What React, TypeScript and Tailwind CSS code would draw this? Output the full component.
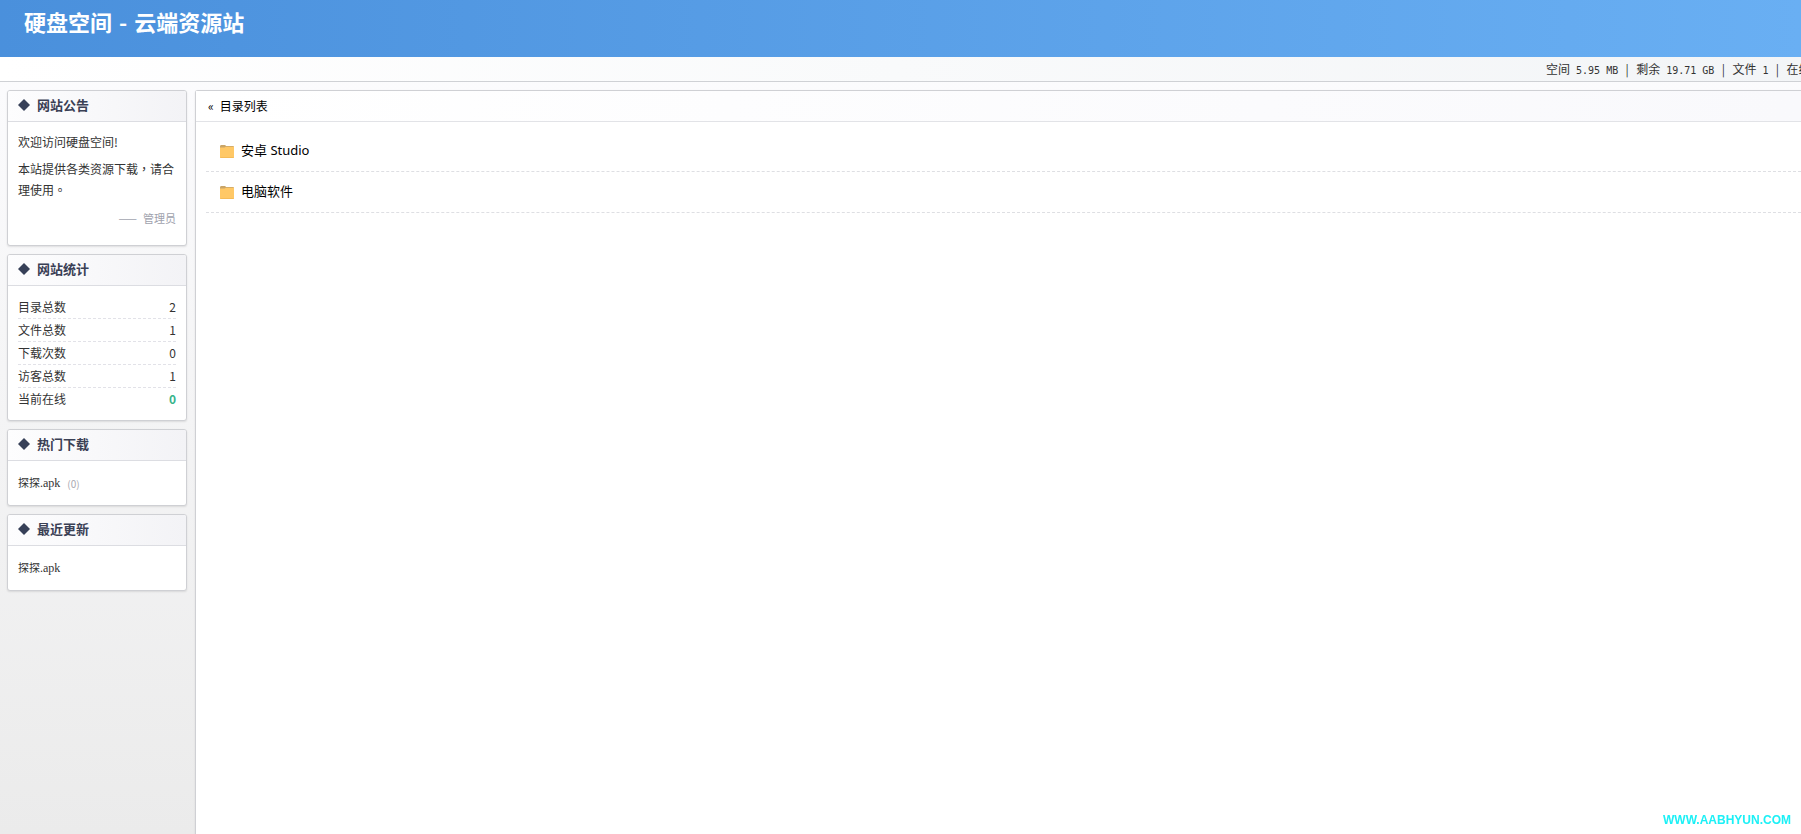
import type { ReactNode } from "react";

function Mono({ children }: { children: ReactNode }) {
  return <span className="font-['DejaVu_Sans_Mono',monospace] text-[10px]">{children}</span>;
}

function Separator() {
  return <span className="inline-block w-[18px] text-center">|</span>;
}

function Card({ title, children }: { title: string; children: ReactNode }) {
  return (
    <section className="overflow-hidden rounded-[3px] border border-[#cfd0d4] bg-white shadow-[0_1px_2px_rgba(0,0,0,0.1)]">
      <h2 className="flex h-[31px] items-center gap-[7px] border-b border-[#dcdde2] bg-linear-to-r from-[#fdfdfe] to-[#f3f3f6] px-[10px] pb-[2px] text-[13px] font-bold text-[#3a4055]">
        <svg viewBox="0 0 12 12" className="size-3" aria-hidden="true">
          <path d="M6 0 12 6 6 12 0 6Z" fill="#374058" />
        </svg>
        {title}
      </h2>
      {children}
    </section>
  );
}

function FileRow({ count }: { count?: string }) {
  return (
    <p className="flex h-11 items-center gap-[7px] px-[10px] text-[11px]">
      <a href="#file" className="flex items-baseline">
        探探<span className="font-['Liberation_Serif',serif] text-[12px]">.apk</span>
      </a>
      {count && <span className="text-[10px] text-[#a8a9b2]">({count})</span>}
    </p>
  );
}

function Folder() {
  return (
    <svg viewBox="0 0 14 13" className="h-[13px] w-[14px]" aria-hidden="true">
      <path d="M0 1.5Q0 0 1 0H5L6.2 1H13Q14 1 14 2V5H0Z" fill="#c9a568" />
      <path d="M0 2.6H4.6L5.8 1.8H14V12Q14 13 13 13H1Q0 13 0 12Z" fill="#ffc866" />
      <path d="M0 12H14Q14 13 13 13H1Q0 13 0 12Z" fill="#f5bb58" />
    </svg>
  );
}

const stats = [
  ["目录总数", "2"],
  ["文件总数", "1"],
  ["下载次数", "0"],
  ["访客总数", "1"],
];

const folders = ["安卓 Studio", "电脑软件"];

export default function App() {
  return (
    <div className="flex h-screen flex-col overflow-hidden bg-linear-to-b from-[#fdfdff] to-[#ebebeb] font-['Noto_Sans_CJK_SC',sans-serif] text-[12px] text-[#333]">
      <header className="h-[57px] shrink-0 bg-linear-to-r from-[#4a90dc] to-[#69aff3] px-6 pt-[5px]">
        <h1 className="text-[22px] leading-[32px] font-bold text-white">
          硬盘空间<span className="px-[2px]"> - </span>云端资源站
        </h1>
      </header>

      <div className="flex h-[25px] shrink-0 justify-end border-b border-[#cfd1d5] bg-linear-to-r from-white to-[#f3f5f7]">
        <p className="w-[255px] overflow-hidden leading-6 whitespace-nowrap">
          空间<Mono> 5.95 MB</Mono>
          <Separator />
          剩余<Mono> 19.71 GB</Mono>
          <Separator />
          文件<Mono> 1</Mono>
          <Separator />
          在线
        </p>
      </div>

      <div className="flex min-h-0 flex-1 gap-2 pt-2 pl-[7px]">
        <aside className="flex w-[180px] shrink-0 flex-col gap-2">
          <Card title="网站公告">
            <div className="px-[10px] pt-[9px] pb-4 leading-[21px]">
              <p>欢迎访问硬盘空间!</p>
              <p className="mt-[6px] font-['Noto_Sans_CJK_TC',sans-serif]">
                本站提供各类资源下载，请合理使用。
              </p>
              <p className="mt-2 flex justify-end gap-[6px] text-[11px] text-[#a0a2ad]">
                <span>——</span>
                <span>管理员</span>
              </p>
            </div>
          </Card>

          <Card title="网站统计">
            <dl className="px-[10px] pt-[10px] pb-[10px] leading-[22px]">
              {stats.map(([label, value]) => (
                <div key={label} className="flex justify-between border-b border-dashed border-[#e2e2e8]">
                  <dt>{label}</dt>
                  <dd>{value}</dd>
                </div>
              ))}
              <div className="flex justify-between">
                <dt>当前在线</dt>
                <dd className="font-bold text-[#38b48b]">0</dd>
              </div>
            </dl>
          </Card>

          <Card title="热门下载">
            <FileRow count="0" />
          </Card>

          <Card title="最近更新">
            <FileRow />
          </Card>
        </aside>

        <main className="min-w-0 flex-1 rounded-tl-[3px] border-t border-l border-[#cfd0d4] bg-white text-black shadow-[0_1px_2px_rgba(0,0,0,0.1)]">
          <h2 className="flex h-[31px] items-center gap-[6px] border-b border-[#e2e3e7] bg-linear-to-r from-white to-[#f9f9fc] px-3">
            <span>«</span>目录列表
          </h2>
          <ul className="pt-[9px] pl-[10px]">
            {folders.map((name) => (
              <li key={name} className="border-b border-dashed border-[#dedfe3]">
                <a href="#folder" className="flex h-10 items-center gap-[7px] px-[14px] font-['Noto_Sans','Noto_Sans_CJK_SC',sans-serif] text-[13px]">
                  <Folder />
                  {name}
                </a>
              </li>
            ))}
          </ul>
        </main>
      </div>

      <a
        href="#site"
        className="fixed right-[10px] bottom-[5px] font-['Liberation_Sans',sans-serif] text-[12px] leading-[18px] font-bold text-[#1cf0f6]"
      >
        WWW.AABHYUN.COM
      </a>
    </div>
  );
}
